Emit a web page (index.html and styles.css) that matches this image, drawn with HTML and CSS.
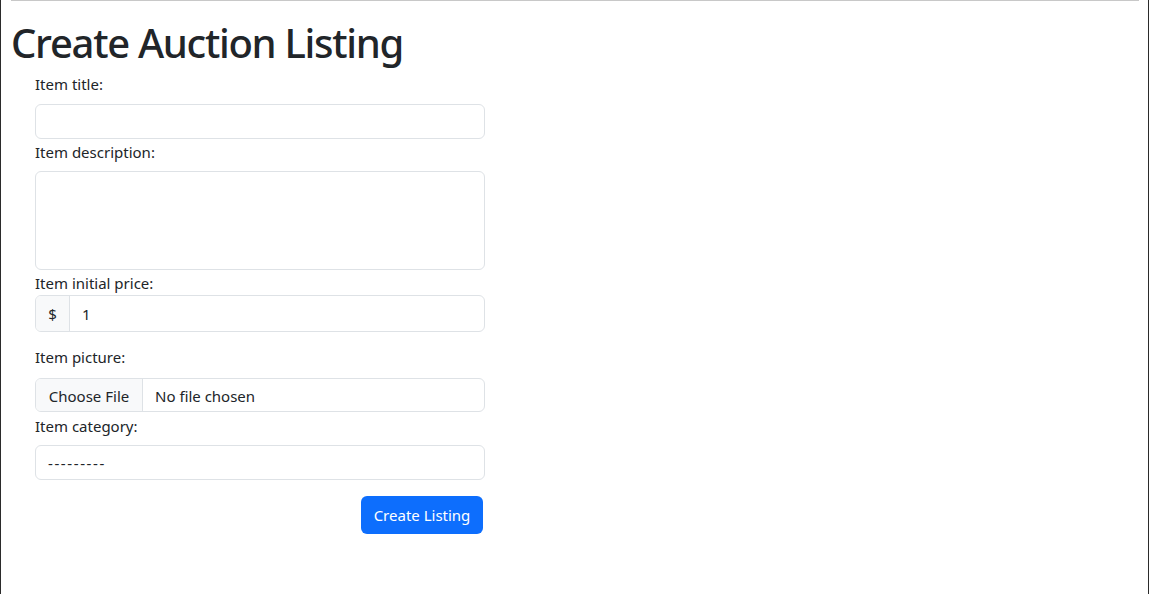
FILE: index.html
```html
<!DOCTYPE html>
<html lang="en">
<head>
<meta charset="utf-8">
<title>Create Auction Listing</title>
<link rel="stylesheet" href="styles.css">
</head>
<body>
<div class="frame">
  <hr class="rule">
  <h1 class="title">Create Auction Listing</h1>
  <form class="listing-form">
    <label class="lbl lbl-title" for="title">Item title:</label>
    <input class="ctl ctl-text" id="title" type="text">

    <label class="lbl lbl-desc" for="desc">Item description:</label>
    <textarea class="ctl ctl-area" id="desc"></textarea>

    <label class="lbl lbl-price" for="price">Item initial price:</label>
    <div class="ctl group">
      <span class="addon">$</span>
      <span class="group-value">1</span>
    </div>

    <label class="lbl lbl-pic">Item picture:</label>
    <div class="ctl file">
      <span class="file-btn">Choose File</span>
      <span class="file-name">No file chosen</span>
    </div>

    <label class="lbl lbl-cat" for="cat">Item category:</label>
    <div class="ctl select" id="cat"><span class="dashes">---------</span></div>

    <div class="actions">
      <button class="btn" type="button">Create Listing</button>
    </div>
  </form>
</div>
</body>
</html>
```

FILE: styles.css
```css
html, body {
  margin: 0;
  padding: 0;
  background: #fff;
}

body {
  font-family: "Noto Sans", "Open Sans", sans-serif;
  color: #212529;
  font-size: 16px;
}

.frame {
  box-sizing: border-box;
  min-height: 100vh;
  border-left: 1px solid #2b2b2b;
  border-right: 1px solid #2b2b2b;
  padding: 0 9px 0 10px;
}

.rule {
  margin: 0;
  border: 0;
  border-top: 1px solid #c8c8c8;
  height: 0;
}

.title {
  margin: 18px 0 0 0;
  font-size: 40px;
  line-height: 48px;
  font-weight: 500;
  letter-spacing: -1.3px;
}

.listing-form {
  margin-left: 24px;
  width: 450px;
  display: flex;
  flex-direction: column;
}

.lbl {
  display: block;
  line-height: 24px;
  font-size: 15px;
}

.lbl-title { margin-top: 5px; }
.lbl-desc { margin-top: 1px; }
.lbl-price { margin-top: 1px; }
.lbl-pic { margin-top: 13px; }
.lbl-cat { margin-top: 2px; }

.ctl {
  box-sizing: border-box;
  width: 450px;
  border: 1px solid #dee2e6;
  border-radius: 6px;
  background: #fff;
  font-family: inherit;
  font-size: 15px;
  color: #212529;
  margin: 0;
}

.ctl-text {
  height: 35px;
  margin-top: 8px;
  padding: 0 12px;
}

.ctl-area {
  height: 99px;
  margin-top: 7px;
  padding: 6px 12px;
  resize: none;
  display: block;
}

.group {
  height: 37px;
  display: flex;
  align-items: stretch;
  overflow: hidden;
}

.addon {
  width: 33px;
  background: #f8f9fa;
  border-right: 1px solid #dee2e6;
  display: flex;
  align-items: center;
  justify-content: center;
}

.group-value {
  display: flex;
  align-items: center;
  padding-left: 12px;
}

.file {
  height: 34px;
  margin-top: 9px;
  display: flex;
  align-items: stretch;
  overflow: hidden;
}

.file-btn {
  width: 106px;
  padding-top: 2px;
  background: #f8f9fa;
  border-right: 1px solid #dee2e6;
  display: flex;
  align-items: center;
  justify-content: center;
}

.file-name {
  display: flex;
  align-items: center;
  padding-left: 12px;
  padding-top: 2px;
}

.select {
  height: 35px;
  margin-top: 7px;
  padding: 0 12px;
  display: flex;
  align-items: center;
}

.dashes {
  letter-spacing: 1.6px;
}

.actions {
  display: flex;
  justify-content: flex-end;
  margin-top: 16px;
  padding-right: 2px;
}

.btn {
  width: 122px;
  height: 38px;
  border: 0;
  border-radius: 6px;
  background: #0d6efd;
  color: #fff;
  font-family: inherit;
  font-size: 15px;
  padding: 0;
}
```
